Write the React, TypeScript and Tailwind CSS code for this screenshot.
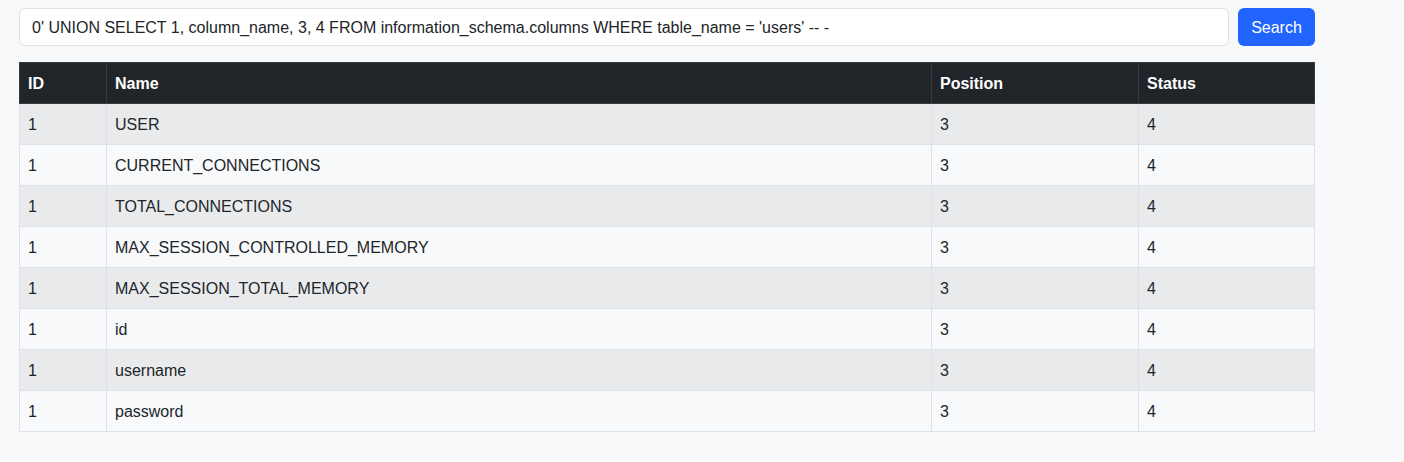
const rows = [
  'USER',
  'CURRENT_CONNECTIONS',
  'TOTAL_CONNECTIONS',
  'MAX_SESSION_CONTROLLED_MEMORY',
  'MAX_SESSION_TOTAL_MEMORY',
  'id',
  'username',
  'password',
];

export default function App() {
  return (
    <div className="min-h-[462px] bg-[#f8f9fa] pt-2 pl-[19px] text-[16px] text-[#212529]" style={{ fontFamily: '"Liberation Sans", Arial, sans-serif' }}>
      <div className="w-[1296px]">
        {/* Search bar */}
        <form className="mb-4 flex gap-[9px]" onSubmit={(e) => e.preventDefault()}>
          <input
            type="text"
            defaultValue="0' UNION SELECT 1, column_name, 3, 4 FROM information_schema.columns WHERE table_name = 'users' -- -"
            className="h-[38px] flex-1 rounded-[6px] border border-[#dee2e6] bg-white px-3 pt-px leading-6 text-[#212529] outline-none"
          />
          <button type="submit" className="h-[38px] w-[77px] rounded-[6px] bg-[#2264fe] pt-px text-white">
            Search
          </button>
        </form>

        {/* Results */}
        <table className="w-full border-collapse text-left">
          <thead className="bg-[#212529] text-white">
            <tr className="h-[41px]">
              <th className="w-[87px] border border-[#373b3e] px-2 pt-[2px] font-bold">ID</th>
              <th className="w-[825px] border border-[#373b3e] px-2 pt-[2px] font-bold">Name</th>
              <th className="w-[207px] border border-[#373b3e] px-2 pt-[2px] font-bold">Position</th>
              <th className="border border-[#373b3e] px-2 pt-[2px] font-bold">Status</th>
            </tr>
          </thead>
          <tbody>
            {rows.map((name, i) => (
              <tr key={name} className={`h-[41px] ${i % 2 === 0 ? 'bg-[#e9eaec]' : 'bg-[#f8f9fa]'}`}>
                <td className="border border-[#dee2e6] px-2 pt-[2px]">1</td>
                <td className="border border-[#dee2e6] px-2 pt-[2px]">{name}</td>
                <td className="border border-[#dee2e6] px-2 pt-[2px]">3</td>
                <td className="border border-[#dee2e6] px-2 pt-[2px]">4</td>
              </tr>
            ))}
          </tbody>
        </table>
      </div>
    </div>
  );
}
